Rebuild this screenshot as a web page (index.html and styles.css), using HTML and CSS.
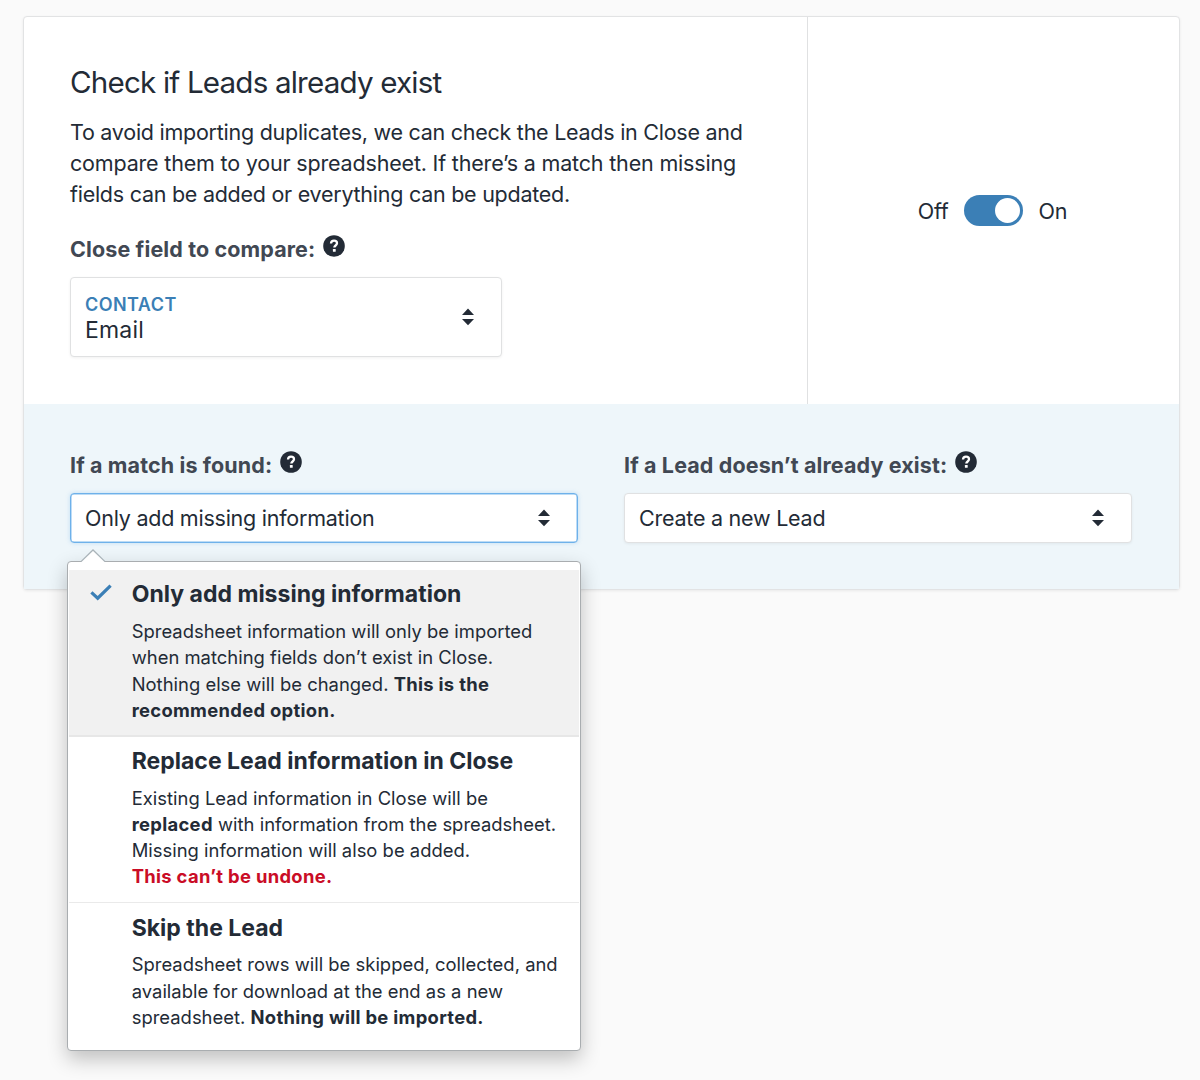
FILE: index.html
```html
<!DOCTYPE html>
<html lang="en">
<head>
<meta charset="utf-8">
<title>Import Leads</title>
<link rel="stylesheet" href="styles.css">
</head>
<body>
<svg class="sprite" aria-hidden="true">
  <symbol id="help" viewBox="0 0 22 22"><circle cx="11" cy="11" r="10.8" fill="#232b36"/><path d="M8 8.5C8.1 6.6 9.2 5.7 11 5.7s3 1 3 2.6c0 2.2-2.7 2.2-2.7 4.3" fill="none" stroke="#fff" stroke-width="2.3"/><rect x="9.9" y="14.1" width="2.8" height="2.7" rx=".5" fill="#fff"/></symbol>
  <symbol id="sort" viewBox="0 0 12 18"><path d="M6 .4 12 6.9H0zM6 17.2 0 11.1h12z" fill="#232b36"/></symbol>
</svg>
<main class="card">
  <section class="top">
    <div class="intro">
      <h1 class="heading">Check if Leads already exist</h1>
      <p class="lead">To avoid importing duplicates, we can check the Leads in Close and<br><span class="loose">compare them to your spreadsheet. If there’s a match then missing</span><br>fields can be added or everything can be updated.</p>
      <div class="label"><span>Close field to compare:</span><svg class="help"><use href="#help"/></svg></div>
      <div class="select select-field">
        <div class="value"><div class="kicker">CONTACT</div><div class="field-name">Email</div></div>
        <svg class="sort"><use href="#sort"/></svg>
      </div>
    </div>
    <div class="switcher"><span>Off</span><div class="toggle"><i class="knob"></i></div><span>On</span></div>
  </section>
  <section class="rules">
    <div class="rule">
      <div class="label"><span>If a match is found:</span><svg class="help"><use href="#help"/></svg></div>
      <div class="select focused"><span>Only add missing information</span><svg class="sort"><use href="#sort"/></svg></div>
      <div class="menu">
        <svg class="arrow" viewBox="0 0 26 14"><path d="M1 13 13 1l12 12v1H1z" fill="#fff"/><path d="M1 12.6 13 1l12 11.6" fill="none" stroke="#aab4b9" stroke-width="1.3"/></svg>
        <div class="option selected">
          <svg class="check" viewBox="0 0 22 17"><path d="M1.4 8.4 7.7 14.2 20.6 1.6" fill="none" stroke="#3b7fb6" stroke-width="3.2"/></svg>
          <h2 class="title">Only add missing information</h2>
          <p class="desc">Spreadsheet information will only be imported<br>when matching fields don’t exist in Close.<br>Nothing else will be changed. <b>This is the</b><br><b>recommended option.</b></p>
        </div>
        <div class="option">
          <h2 class="title">Replace Lead information in Close</h2>
          <p class="desc">Existing Lead information in Close will be<br><b>replaced</b> with information from the spreadsheet.<br>Missing information will also be added.<br><b class="danger">This can’t be undone.</b></p>
        </div>
        <div class="option">
          <h2 class="title">Skip the Lead</h2>
          <p class="desc">Spreadsheet rows will be skipped, collected, and<br>available for download at the end as a new<br>spreadsheet. <b>Nothing will be imported.</b></p>
        </div>
      </div>
    </div>
    <div class="rule">
      <div class="label"><span>If a Lead doesn’t already exist:</span><svg class="help"><use href="#help"/></svg></div>
      <div class="select"><span>Create a new Lead</span><svg class="sort"><use href="#sort"/></svg></div>
    </div>
  </section>
</main>
</body>
</html>
```
FILE: styles.css
```css
* { box-sizing: border-box; }
body {
  margin: 0;
  min-height: 1080px;
  padding: 16px 20px 0 23px;
  background: #fafafa;
  color: #232b36;
  font-family: Inter, "Liberation Sans", sans-serif;
  font-size: 21.5px;
  white-space: nowrap;
}
h1, h2, p { margin: 0; }
.sprite { position: absolute; width: 0; height: 0; }
.card {
  width: 1157px;
  height: 574px;
  border: 1px solid #e2e3e4;
  border-radius: 4px;
  background: #fff;
  box-shadow: 0 1px 3px rgba(0, 0, 0, .07);
}
.top { display: flex; height: 387px; }
.intro { width: 784px; padding: 43px 0 0 46px; border-right: 1px solid #e0e1e2; }
.heading { font-size: 29.6px; line-height: 45px; font-weight: 400; letter-spacing: -.82px; }
.lead { margin-top: 12px; line-height: 31px; letter-spacing: -.26px; }
.loose { letter-spacing: -.18px; }
.label {
  display: flex;
  align-items: center;
  gap: 8px;
  height: 32px;
  color: #414853;
  font-weight: 700;
  letter-spacing: .12px;
}
.intro .label { margin-top: 23px; }
.help { width: 22px; height: 22px; margin-top: -6px; }
.select {
  display: flex;
  align-items: center;
  justify-content: space-between;
  height: 50px;
  padding: 0 27px 0 14px;
  border: 1px solid #e0e1e2;
  border-radius: 4px;
  background: #fff;
  box-shadow: 0 1px 3px rgba(0, 0, 0, .06);
  letter-spacing: -.24px;
}
.sort { width: 12px; height: 18px; }
.select-field { width: 432px; height: 80px; margin-top: 12px; }
.value { padding-top: 1px; }
.kicker { color: #3b7fb6; font-size: 18px; font-weight: 600; line-height: 26px; letter-spacing: .45px; }
.field-name { font-size: 23px; line-height: 25px; letter-spacing: .2px; }
.switcher { flex: 1; display: flex; align-items: center; justify-content: center; gap: 15.5px; padding-right: 2px; letter-spacing: -.2px; }
.toggle { display: flex; justify-content: flex-end; width: 59px; height: 31px; padding: 3px; border-radius: 16px; background: #3b7fb6; }
.knob { width: 25px; height: 25px; border-radius: 50%; background: #fff; }
.rules {
  display: grid;
  grid-template-columns: 508px 508px;
  gap: 46px;
  height: 185px;
  padding: 45px 46px 0;
  background: #eef6fa;
}
.rule { position: relative; }
.rule .select { margin-top: 12px; }
.rule .focused { border-color: #6eb1ea; box-shadow: inset 0 0 0 .5px #7cb9ec, 0 0 4px rgba(110, 177, 234, .35); }
.menu {
  position: absolute;
  z-index: 2;
  top: 112px;
  left: -3px;
  width: 514px;
  height: 490px;
  padding-top: 8px;
  border: 1px solid #a9adb0;
  border-radius: 4px;
  background: #fff;
  box-shadow: 0 8px 20px rgba(0, 0, 0, .24);
}
.arrow { position: absolute; top: -13px; left: 12px; width: 26px; height: 14px; }
.option { position: relative; height: 166.6px; margin: 0 1px; padding: 8.4px 0 0 62.7px; border-bottom: 1px solid #eaeaea; }
.option:last-child { border: 0; }
.selected { background: #f1f1f1; border-bottom: 2px solid #e7e7e7; }
.check { position: absolute; top: 13.5px; left: 21px; width: 22px; height: 17px; }
.title { font-size: 23px; line-height: 32px; font-weight: 700; letter-spacing: .01px; }
.desc { margin-top: 7.8px; font-size: 18.4px; line-height: 26.2px; letter-spacing: .02px; }
b { font-weight: 700; letter-spacing: .31px; }
.danger { color: #ca0c26; }
```
